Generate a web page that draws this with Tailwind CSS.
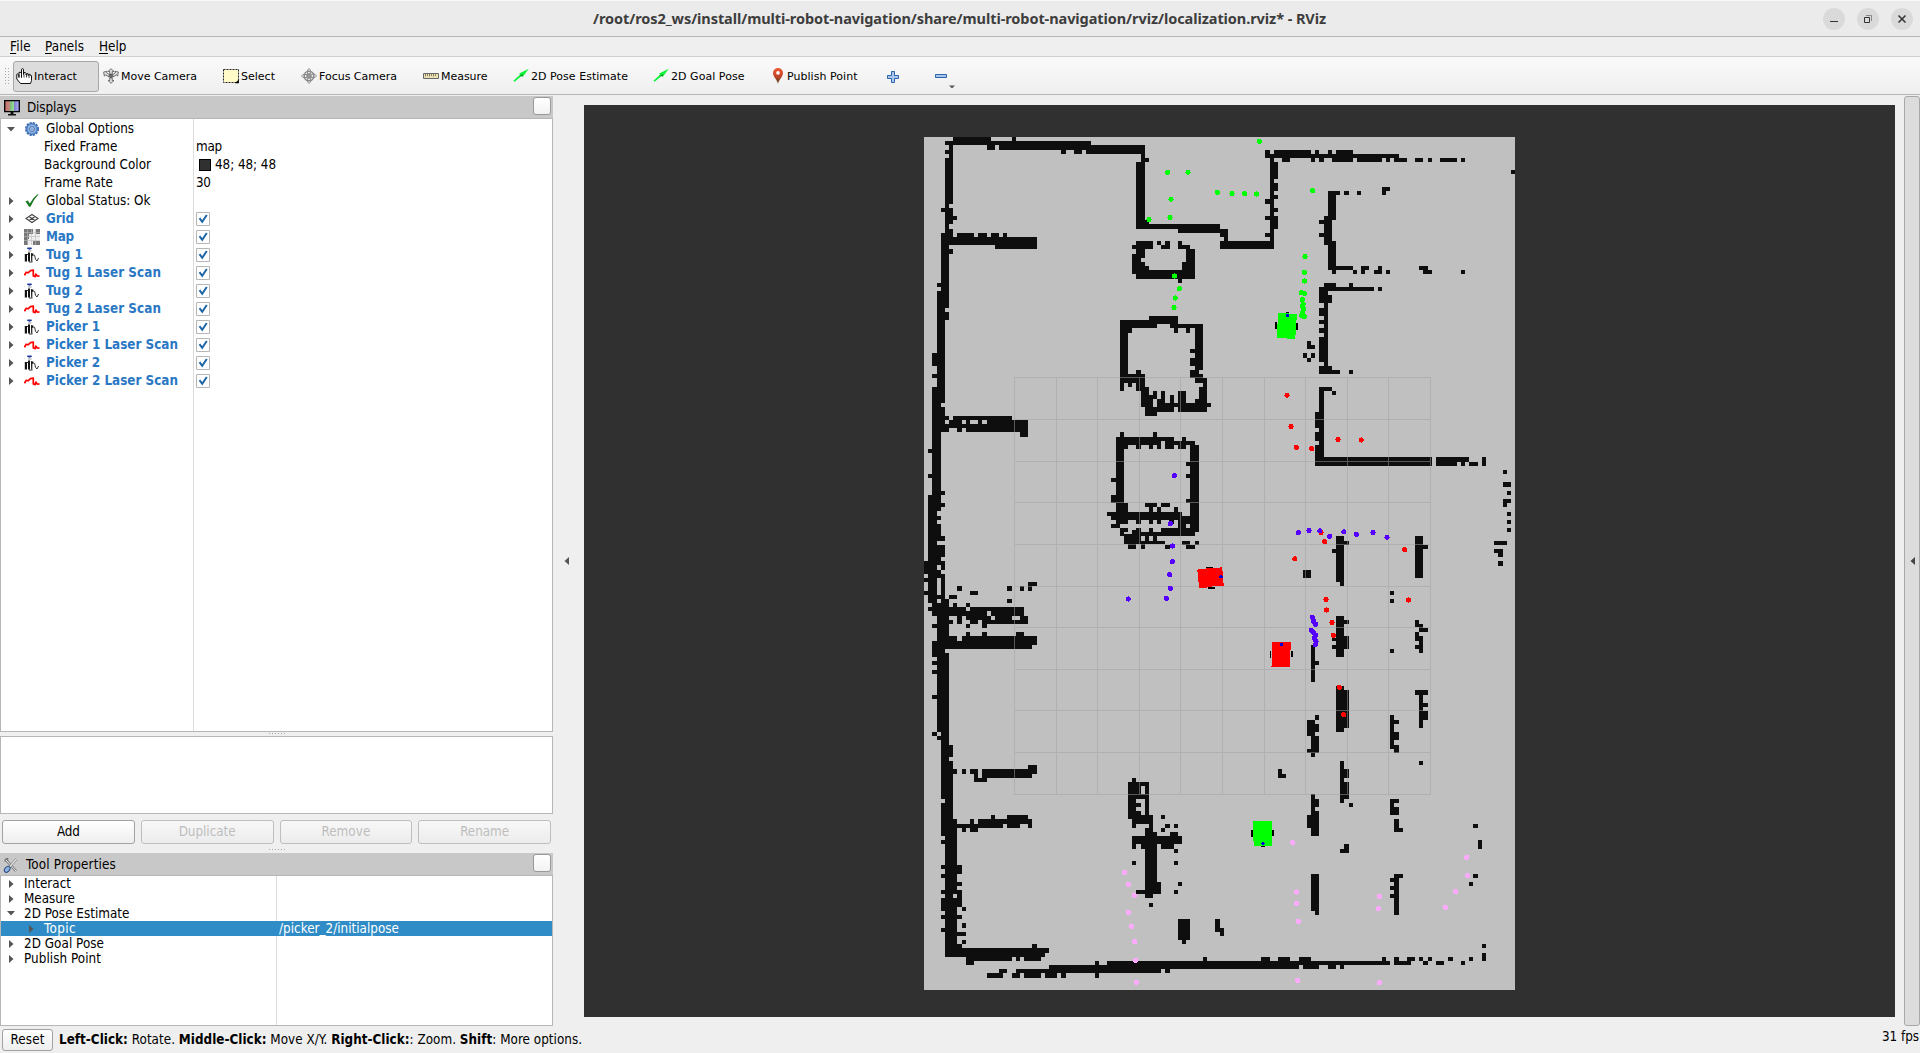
<!DOCTYPE html>
<html lang="en">
<head>
<meta charset="utf-8">
<title>RViz</title>
<script src="https://cdn.jsdelivr.net/npm/@tailwindcss/browser@4"></script>
</head>
<body class="w-[1920px] h-[1053px] overflow-hidden bg-[#efefef] text-black flex flex-col font-[family-name:'DejaVu_Sans_Condensed','DejaVu_Sans',sans-serif] text-[13.33px] font-stretch-condensed whitespace-nowrap">

<svg class="absolute size-0">
  <defs>
  <linearGradient id="pg" x2="0" y2="1"><stop offset="0" stop-color="#f0582f"/><stop offset=".5" stop-color="#c4452c"/><stop offset="1" stop-color="#4f4418"/></linearGradient>
  <linearGradient id="sg"><stop offset="0" stop-color="#c96a6a"/><stop offset=".33" stop-color="#c08a80"/><stop offset=".34" stop-color="#73b873"/><stop offset=".65" stop-color="#9ae09a"/><stop offset=".66" stop-color="#8080c8"/><stop offset="1" stop-color="#b0b0ff"/></linearGradient>
  </defs>
  <symbol id="hand" viewBox="0 0 16 16"><path d="M5.5 9V1.8Q5.5.6 6.5.6T7.5 1.8V6.5L8 4.6Q9.4 3.8 10 5.2V7Q10.3 4.8 12.2 5.8V7.6Q12.5 5.8 14 6.4V7.8Q14.6 6.6 15.5 7.6V12.5L14.5 15.5H4.5L.8 11V6.2Q1.8 5.2 2.8 6.6L3 9.5V4.4H5.5" fill="#fff" stroke="#111"/><path d="M5.5 6V10M8 6.5V9.5M10.5 7V9.5M13 7.5V10" stroke="#111" fill="none" stroke-width=".8"/></symbol>
  <symbol id="move" viewBox="0 0 16 16"><g fill="#ddd" stroke="#555" stroke-width=".8"><path d="M8 .7L11 3.5H9.3V6.5H6.7V3.5H5z M8 15.3L11 12.5H9.3V9.5H6.7V12.5H5z M.6 4L4.2 3.2L3.6 4.8L7 7L6 9L2.4 6.8L1.4 8.2z M15.4 4L11.8 3.2L12.4 4.8L9 7L10 9L13.6 6.8L14.6 8.2z"/></g><path d="M5.5 8H10.5M8 5.5V10.5" stroke="#444"/></symbol>
  <symbol id="select" viewBox="0 0 16 16"><path d="M.5 1.5h15v13h-15z" fill="#fffac8" stroke="#222" stroke-dasharray="2 1"/><path d="M15.8 11.5v3.8H12z" fill="#000"/></symbol>
  <symbol id="focus" viewBox="0 0 16 16"><g fill="none" stroke="#8a8a8a"><circle cx="8" cy="8" r="4.8" stroke-width="1.6"/><circle cx="8" cy="8" r="2"/><path d="M8 .5L9.3 2V6.2H14L15.5 8L14 9.5H9.6V14L8 15.5L6.7 14V9.6H2L.5 8L2 6.5H6.6V2z"/></g><path d="M5 8h6M8 5v6" stroke="#666" stroke-width=".8"/></symbol>
  <symbol id="ruler" viewBox="0 0 16 16"><path d="M.5 5.5h15v5h-15z" fill="#ece2b4" stroke="#666"/><path d="M2.5 6v2.5M4.5 6v2M6.5 6v2.5M8.5 6v2M10.5 6v2.5M12.5 6v2" stroke="#5d5640" stroke-width=".7"/></symbol>
  <symbol id="arrow" viewBox="0 0 16 16"><path d="M.4 12.8L7 6.8L6.2 5.5L15.8.7L10 8.4L8.6 8L1.6 13.8z" fill="#0bf339"/><path d="M6.2 7.8L10 8.4L9.6 6.2z" fill="#0a9a22"/></symbol>
  <symbol id="pin" viewBox="0 0 12 16"><path d="M6 16C5.5 12 1 9 1 5A5 5 0 0 1 11 5C11 9 6.5 12 6 16z" fill="url(#pg)"/><circle cx="6" cy="4.9" r="1.8" fill="#fff"/></symbol>
  <symbol id="screen" viewBox="0 0 16 16"><path d="M.7.7h14.6v11H.7z" fill="url(#sg)" stroke="#000" stroke-width="1.3"/><path d="M6.5 12h3v2h2.5v1.6H4V14h2.5z" fill="#111"/></symbol>
  <symbol id="gear" viewBox="0 0 16 16"><circle cx="8" cy="8" r="6" fill="#8fb3e0" stroke="#3a6cb0" stroke-width="2" stroke-dasharray="2.2 .94"/><circle cx="8" cy="8" r="5" fill="#8fb3e0" stroke="#4c7dc0"/><circle cx="8" cy="8" r="2.4" fill="#c5d9f2" stroke="#3a6cb0"/><circle cx="8" cy="8" r=".8" fill="#3a6cb0"/></symbol>
  <symbol id="ok" viewBox="0 0 16 16"><path d="M1.5 8.2L3.8 7.5L5.8 10.5Q9 4.5 13.5 1.2L14.5 1.6Q9.5 6.5 6.5 13.8H5z" fill="#1a7a22"/></symbol>
  <symbol id="grid" viewBox="0 0 16 16"><path d="M8 3.5L14 7.5L8 11.5L2 7.5z M5 5.5L11 9.5M11 5.5L5 9.5" stroke="#444" fill="none" stroke-width="1.1"/></symbol>
  <symbol id="map" viewBox="0 0 16 16"><path d="M0 0h16v16H0z" fill="#eee"/><path d="M0 0h9v5H5v5H4v6H0zM12 0h4v5h-4zM9 12h7v4H9z" fill="#777"/><path d="M3.5 0v16M7.5 0v16M11.5 0v16M0 3.5h16M0 7.5h16M0 11.5h16" stroke="#bbb" stroke-width=".6"/></symbol>
  <symbol id="robot" viewBox="0 0 16 16"><path d="M3.5 .5h4l.5 1.3-2.5 1-2.5-1z" fill="#223a9a"/><path d="M4 3.5h3.5v1H4z" fill="#999"/><path d="M.8 7h2.2v7.5H.8zM4 5.5h2v9H4z M7 6l2.5.7V8L8.3 9v5.5H7.2z" fill="#111"/><path d="M9.5 8.5Q11 7.5 11 10T13 14L14.6 11M3 7.5h1.5M5 15h3.5" stroke="#333" fill="none" stroke-width="1"/></symbol>
  <symbol id="laser" viewBox="0 0 16 16"><path d="M.5 10.2L2.2 7.3L4 7.8L6.5 5.6L9.3 5V11L11.2 11.6L11.8 9L13 10.8L15.5 11.2" fill="none" stroke="#f00" stroke-width="1.7" stroke-linejoin="round"/></symbol>
  <symbol id="tools" viewBox="0 0 16 16"><path d="M3 3L13 14M4 1v2.5H1.5" stroke="#777" stroke-width="2.6" fill="none"/><path d="M3 3L13 14" stroke="#eee"/><path d="M13.5 2L5.5 11" stroke="#777" stroke-width="2.4"/><path d="M13.5 2L6 10.5" stroke="#e8e8e8" stroke-width="1.2"/><ellipse cx="4.2" cy="12.3" rx="2.3" ry="3.4" transform="rotate(42 4.2 12.3)" fill="#8fb3e0" stroke="#23457c"/></symbol>
  <symbol id="right" viewBox="0 0 5 8"><path d="M0 0L4.5 4L0 8z"/></symbol>
  <symbol id="down" viewBox="0 0 8 5"><path d="M0 0H8L4 4.5z"/></symbol>
  <symbol id="check" viewBox="0 0 14 14"><path d="M.5.5h13v13H.5z" fill="#fff" stroke="#b6b6b6"/><path d="M3.5 6.2L6.2 9.8L10.8 3" stroke="#1e66a8" stroke-width="2" fill="none"/></symbol>
</svg>

<header class="h-[37px] shrink-0 bg-[#ebebeb] border-t border-t-[#fafafa] border-b border-b-[#b6b6b6] flex items-center text-[#3d3d3d]">
  <h1 class="ml-[593px] w-[733px] font-[family-name:'Noto_Sans',sans-serif] font-stretch-normal font-bold text-[14.5px] pt-px"><span data-w="733">/root/ros2_ws/install/multi-robot-navigation/share/multi-robot-navigation/rviz/localization.rviz* - RViz</span></h1>
  <div class="ml-auto mr-[7px] flex gap-3">
    <div class="size-[22px] rounded-full bg-[#dadada]"><svg viewBox="0 0 22 22"><path d="M7 13.5h8" stroke="#333"/></svg></div>
    <div class="size-[22px] rounded-full bg-[#dadada]"><svg viewBox="0 0 22 22" fill="none"><path d="M7.5 9.5h5v5h-5z" stroke="#333"/><path d="M9 7.5h5.5V13" stroke="#888"/></svg></div>
    <div class="size-[22px] rounded-full bg-[#dadada]"><svg viewBox="0 0 22 22"><path d="M7.5 7.5l7 7M14.5 7.5l-7 7" stroke="#333" stroke-width="1.5"/></svg></div>
  </div>
</header>

<nav class="h-5 shrink-0 border-b border-[#d0d0d0] flex items-center leading-[19px]">
  <div class="w-[35px] ml-[10px]"><span data-w="21"><u class="underline-offset-2">F</u>ile</span></div>
  <div class="w-[54px]"><span data-w="39"><u class="underline-offset-2">P</u>anels</span></div>
  <div><span data-w="27.5"><u class="underline-offset-2">H</u>elp</span></div>
</nav>

<div class="h-[38px] shrink-0 border-b border-[#b6b6b6] bg-linear-to-b from-[#fafafa] to-[#efefef] flex items-center pt-[2px] font-[family-name:'DejaVu_Sans',sans-serif] font-stretch-normal text-[11px]">
  <svg class="w-2 h-[18px] ml-1"><path d="M1.5 0v18M4.5 0v18" stroke="#aaa" stroke-dasharray="1 2"/></svg>
  <div class="w-[86px] h-[31px] ml-px border border-[#a8a8a8] rounded-[3px] bg-[#dcdcdc] flex items-center gap-[2px] pl-[2px]"><svg class="size-4 mb-[2px]"><use href="#hand"/></svg><span class="pt-px" data-w="42.7">Interact</span></div>
  <div class="w-[120px] pl-1 flex items-center gap-[2px]"><svg class="size-4 mb-[2px]"><use href="#move"/></svg><span class="pt-px" data-w="76">Move Camera</span></div>
  <div class="w-[78px] pl-1 flex items-center gap-[2px]"><svg class="size-4 mb-[2px]"><use href="#select"/></svg><span class="pt-px" data-w="34">Select</span></div>
  <div class="w-[122px] pl-1 flex items-center gap-[2px]"><svg class="size-4 mb-[2px]"><use href="#focus"/></svg><span class="pt-px" data-w="78">Focus Camera</span></div>
  <div class="w-[90px] pl-1 flex items-center gap-[2px]"><svg class="size-4 mb-[2px]"><use href="#ruler"/></svg><span class="pt-px" data-w="46.5">Measure</span></div>
  <div class="w-[140px] pl-1 flex items-center gap-[2px]"><svg class="size-4 mb-[2px]"><use href="#arrow"/></svg><span class="pt-px" data-w="97">2D Pose Estimate</span></div>
  <div class="w-[118px] pl-1 flex items-center gap-[2px]"><svg class="size-4 mb-[2px]"><use href="#arrow"/></svg><span class="pt-px" data-w="73.5">2D Goal Pose</span></div>
  <div class="w-[121px] pl-[5px] flex items-center gap-[3px]"><svg class="w-3 h-4 mb-[2px]"><use href="#pin"/></svg><span class="pt-px" data-w="70.5">Publish Point</span></div>
  <svg class="w-3 h-3 -ml-px" viewBox="0 0 12 12"><path d="M4.5.5h3v4h4v3h-4v4h-3v-4h-4v-3h4z" fill="#a8c6ec" stroke="#2d64ac"/></svg>
  <svg class="w-[22px] h-[22px] ml-9 mt-px" viewBox="0 0 22 22"><path d="M.5 8.5h11v3H.5z" fill="#a8c6ec" stroke="#2d64ac"/><path d="M14 19.5h6l-3 3z" fill="#555"/></svg>
</div>

<main class="h-[931px] shrink-0 flex pt-px">
  <aside class="w-[553px] flex flex-col">
    <div class="h-[22px] shrink-0 bg-[#c8c8c8] flex items-center pl-1">
      <svg class="size-4 mt-[2px]"><use href="#screen"/></svg>
      <span class="ml-[7px] pt-[2px]" data-w="49.5">Displays</span>
      <i class="ml-auto mr-[2px] w-[18px] h-[18px] mb-[2px] rounded-[3px] border border-[#999] bg-linear-to-b from-white to-[#f2f2f2]"></i>
    </div>
    <div id="displays" class="h-[614px] pt-px shrink-0 bg-white border border-[#b6b6b6] flex flex-col bg-[linear-gradient(#dcdcdc,#dcdcdc)] bg-[length:1px_100%] bg-[position:192px_0] bg-no-repeat"></div>
    <svg class="h-1 w-4 self-center mr-0 shrink-0"><path d="M0 1.5h16" stroke="#aaa" stroke-dasharray="1 2"/></svg>
    <div class="h-[78px] shrink-0 bg-white border border-[#b6b6b6]"></div>
    <div class="flex gap-[6px] px-[2px] pt-[6px] shrink-0">
      <button class="flex-1 h-6 rounded-[3px] border border-[#a2a2a2] bg-linear-to-b from-white to-[#eeeeee] leading-[22px]"><span data-w="23">Add</span></button>
      <button class="flex-1 h-6 rounded-[3px] border border-[#bebebe] bg-linear-to-b from-[#f8f8f8] to-[#ececec] leading-[22px] text-[#bebebe]"><span data-w="57">Duplicate</span></button>
      <button class="flex-1 h-6 rounded-[3px] border border-[#bebebe] bg-linear-to-b from-[#f8f8f8] to-[#ececec] leading-[22px] text-[#bebebe]"><span data-w="49">Remove</span></button>
      <button class="flex-1 h-6 rounded-[3px] border border-[#bebebe] bg-linear-to-b from-[#f8f8f8] to-[#ececec] leading-[22px] text-[#bebebe]"><span data-w="49">Rename</span></button>
    </div>
    <svg class="h-[9px] w-4 self-center shrink-0"><path d="M0 5.5h16" stroke="#aaa" stroke-dasharray="1 2"/></svg>
    <div class="h-[22px] shrink-0 bg-[#c8c8c8] flex items-center pl-[3px]">
      <svg class="size-4 mt-[2px]"><use href="#tools"/></svg>
      <span class="ml-[7px] pt-[2px]" data-w="90">Tool Properties</span>
      <i class="ml-auto mr-[2px] w-[18px] h-[18px] mb-[2px] rounded-[3px] border border-[#999] bg-linear-to-b from-white to-[#f2f2f2]"></i>
    </div>
    <div id="tools-tree" class="h-[151px] shrink-0 bg-white border border-[#b6b6b6] flex flex-col bg-[linear-gradient(#dcdcdc,#dcdcdc)] bg-[length:1px_100%] bg-[position:275px_0] bg-no-repeat"></div>
  </aside>
  <div class="w-[31px] flex items-center"><svg class="w-[5px] h-2 ml-[11px] rotate-180 fill-[#555]"><use href="#right"/></svg></div>
  <section class="w-[1311px] h-[912px] mt-[9px] bg-[#303030]">
    <svg id="scene" width="1311" height="912" viewBox="584 105 1311 912" shape-rendering="crispEdges"></svg>
  </section>
  <div class="w-4 ml-[9px] border border-[#a8a8a8] rounded-[3px] bg-[#dcdcdc] flex items-center justify-center"><svg class="w-[5px] h-2 rotate-180 fill-[#444]"><use href="#right"/></svg></div>
</main>

<footer class="flex-1 flex items-start">
  <button class="ml-[2px] mt-[3px] w-[51px] h-[22px] rounded-[3px] border border-[#a2a2a2] bg-linear-to-b from-white to-[#eeeeee] leading-5"><span data-w="34">Reset</span></button>
  <p class="ml-[6px] mt-[4px] leading-5"><span data-w="523"><b>Left-Click:</b> Rotate. <b>Middle-Click:</b> Move X/Y. <b>Right-Click:</b>: Zoom. <b>Shift</b>: More options.</span></p>
  <p class="ml-auto mr-px mt-px leading-5"><span data-w="37">31 fps</span></p>
</footer>

<script>
const icon = (id, cls) => `<svg class="${cls}"><use href="#${id}"/></svg>`;
const twisty = s => s === 'r' ? icon('right', 'w-[5px] h-2 ml-2 mr-[2px] fill-[#555]')
  : s === 'd' ? icon('down', 'w-2 h-[5px] ml-[6px] mr-px fill-[#555]') : '<i class="w-[15px]"></i>';

// [twisty, icon, label, label width, value or 1 for a checkbox]
const displays = [
  ['d', 'gear', 'Global Options', 88, ''],
  ['', '', 'Fixed Frame', 73.5, '<span data-w="26">map</span>'],
  ['', '', 'Background Color', 107, '<i class="size-3 ml-[3px] mr-[4px] border border-black bg-[#303030]"></i><span data-w="61">48; 48; 48</span>'],
  ['', '', 'Frame Rate', 69, '<span data-w="14.5">30</span>'],
  ['r', 'ok', 'Global Status: Ok', 104.5, ''],
  ['r', 'grid', 'Grid', 28, 1], ['r', 'map', 'Map', 28, 1],
  ['r', 'robot', 'Tug 1', 37, 1], ['r', 'laser', 'Tug 1 Laser Scan', 115, 1],
  ['r', 'robot', 'Tug 2', 37, 1], ['r', 'laser', 'Tug 2 Laser Scan', 115, 1],
  ['r', 'robot', 'Picker 1', 54, 1], ['r', 'laser', 'Picker 1 Laser Scan', 132, 1],
  ['r', 'robot', 'Picker 2', 54, 1], ['r', 'laser', 'Picker 2 Laser Scan', 132, 1]];
document.getElementById('displays').innerHTML = displays.map(([t, ic, label, w, v]) => `
  <div class="h-[18px] shrink-0 flex items-center leading-[18px]">
    <div class="w-[195px] flex items-center">${twisty(t)}${ic ? icon(ic, 'size-4 ml-2 mr-[6px]') : '<i class="w-7"></i>'}
    <span class="${v === 1 ? 'font-bold text-[#2a78c4]' : ''}" data-w="${w}">${label}</span></div>
    ${v === 1 ? icon('check', 'size-[14px]') : v}
  </div>`).join('');

const tools = [['r', 'Interact', 47], ['r', 'Measure', 51], ['d', '2D Pose Estimate', 105.5], ['r', 'Topic', 32, 1], ['r', '2D Goal Pose', 80], ['r', 'Publish Point', 77]];
document.getElementById('tools-tree').innerHTML = tools.map(([t, label, w, sel]) => `
  <div class="h-[15px] shrink-0 flex items-center leading-[15px] ${sel ? 'bg-[#308cc6] text-white' : ''}">
    <div class="w-[278px] flex items-center">${sel ? '<i class="w-5"></i>' : ''}${twisty(t)}<span class="ml-2" data-w="${w}">${label}</span></div>
    ${sel ? '<span data-w="120">/picker_2/initialpose</span>' : ''}
  </div>`).join('');

// Occupied cells per sector, in thirds of a pixel: x1 y1 x2 y2
const sectors = [
 {o: [900, 120], cells: `159 51 273 75,336 51 348 63,135 63 573 75,147 75 159 90,135 90 159 102,147 102 159 114,135 114 159 252,135 252 147 264,123 264 159 276,135 276 159 288,135 288 171 300,135 300 159 312,135 312 147 327,135 327 159 339,123 339 159 375,171 339 222 351,234 339 261 351,273 339 297 351,309 339 321 351,147 351 411 375,285 375 411 387,123 375 147 387,123 387 159 402,123 402 147 489,111 489 147 501,123 501 147 513,111 513 147 564,111 564 135 576,111 576 147 600,111 600 135 699,96 699 135 738,111 738 135 762,96 762 135 774,111 774 135 801,96 801 135 849,96 849 123 861,96 861 135 888,261 75 285 90,297 75 573 90,483 90 498 102,522 90 546 102,558 75 735 102,723 102 735 126,735 114 747 126,708 126 735 327,735 300 747 312,735 312 960 327,834 327 984 339,960 339 984 351,972 351 984 363,960 363 990 387,708 363 759 387,696 375 708 387,708 387 735 402,696 402 735 414,696 414 723 426,696 426 735 438,696 438 747 450,696 450 708 462,708 450 885 477,846 426 885 450,858 387 885 426,834 363 846 375,834 375 870 387,771 363 783 375,783 375 810 387,795 363 810 375,834 477 846 489,747 588 834 612,660 600 747 624,747 612 771 624,810 612 909 624,660 624 696 639,660 639 684 762,822 624 834 639,858 624 870 639,885 624 909 750,870 687 885 699,870 714 885 738,870 750 897 762,870 762 909 774,708 750 723 762,660 762 735 789,660 789 672 813,684 789 696 801,708 789 735 813,885 774 921 789,909 789 921 876,897 801 909 849,723 801 747 861,735 861 771 888,759 813 771 837,747 825 771 837,747 837 759 861,783 813 795 837,771 837 795 849,810 825 822 849,771 849 822 876,822 849 834 861,834 813 858 876,858 849 921 876,921 849 933 861,885 837 909 849`,
  green: '803 157,864 157,952 217,813 238,747 299,810 293,824 468,838 506,826 534,822 563'},
 {o: [1220, 120], cells: `135 90 150 114,162 90 273 102,285 90 297 102,324 90 336 102,348 90 399 102,150 102 537 114,150 114 162 387,186 114 210 126,273 114 285 126,297 114 312 126,336 114 399 126,411 114 486 126,498 114 510 126,522 114 561 126,585 114 609 126,624 114 636 126,660 114 711 126,723 114 735 126,873 150 885 162,162 126 174 177,162 189 174 213,162 225 174 237,135 237 150 252,162 264 174 276,135 288 150 300,162 288 174 327,135 339 150 351,0 363 162 387,0 327 24 351,12 351 24 363,486 201 510 213,486 213 498 225,324 213 360 225,372 213 387 225,411 213 423 225,324 225 348 300,312 288 336 375,297 300 312 312,297 339 312 351,324 363 348 450,348 438 399 450,336 450 348 462,399 450 411 462,423 438 447 450,423 450 435 462,474 438 486 462,462 450 474 462,498 450 510 462,597 438 624 450,609 450 636 462,723 450 735 462,312 489 348 501,387 489 399 501,297 501 462 513,474 501 486 513,297 513 324 549,324 525 336 549,312 549 324 738,297 564 312 588,297 600 312 612,297 625 312 639,297 651 312 726,297 738 336 762,336 750 360 762,387 750 399 762,261 663 273 687,273 675 285 687,249 699 261 714,273 699 285 714,261 714 273 726,297 801 336 813,336 813 348 825,297 813 312 1011,285 876 297 924,285 936 297 963,285 975 297 1038,285 1011 636 1038,648 1011 711 1038,711 1011 747 1026,723 1026 735 1038,747 1026 774 1038,786 1011 798 1038,849 1050 861 1062`,
  green: '118 64,36 221,74 221,110 222,278 212,255 410,253 457,254 483,244 518,253 520,247 539,250 552,248 558,251 567,247 578,245 586,253 590', red: '201 826,213 920,229 982,275 986,354 959,424 960'},
 {o: [900, 400], cells: `96 48 147 60,159 48 336 60,96 60 135 72,147 60 186 72,198 60 210 72,234 60 246 72,261 60 384 72,96 72 384 84,96 84 147 96,171 84 186 96,198 84 384 96,360 96 384 111,96 96 123 285,84 147 96 159,84 222 96 234,123 273 135 285,84 285 123 297,84 297 123 309,84 309 135 321,84 321 123 333,84 333 111 348,84 348 123 360,84 360 111 372,84 372 123 408,84 408 135 423,84 423 111 435,84 435 135 471,84 471 123 483,72 483 135 495,72 495 111 510,123 495 135 510,72 510 123 522,84 522 135 534,72 534 111 546,123 534 135 573,84 546 111 573,72 573 111 585,123 573 135 585,84 585 135 597,84 597 111 609,123 597 147 609,96 609 147 621,159 609 171 621,198 609 210 621,84 621 198 633,210 621 372 633,171 558 186 573,210 573 234 585,147 585 171 597,321 558 336 573,360 558 372 573,384 546 411 558,384 558 396 573,321 597 336 609,96 633 261 648,273 633 372 648,111 648 147 660,171 648 186 672,198 648 273 660,285 648 336 660,360 648 384 660,111 660 159 672,210 660 234 672,246 660 384 672,96 672 147 684,198 672 210 684,246 672 261 684,111 684 147 723,198 696 210 708,246 696 261 708,348 696 372 708,147 708 171 723,186 708 411 735,96 723 396 747,96 747 135 759,96 759 147 771,111 771 147 783,96 783 147 795,111 795 147 810,96 810 147 822,111 822 147 885,96 885 147 897,111 897 147 900,660 96 672 111,759 96 771 111,846 111 858 123,648 111 822 123,648 123 783 135,795 123 885 135,648 135 684 147,708 135 723 147,747 135 759 147,771 135 783 147,795 135 822 147,834 123 858 147,870 135 897 396,858 186 870 198,858 222 870 234,858 297 870 309,648 147 672 309,633 234 648 246,633 285 648 309,648 309 684 336,735 309 771 321,783 309 810 321,747 321 759 336,771 321 783 336,822 321 834 336,621 336 648 348,648 336 846 360,846 348 870 372,633 348 648 360,648 360 684 372,708 360 723 372,747 360 759 372,771 360 783 372,807 360 822 372,834 360 858 408,633 372 660 384,858 384 885 408,660 384 672 408,672 384 684 396,672 402 684 408,684 402 696 408,696 390 708 408,708 384 723 408,672 408 723 423,735 408 747 423,759 408 771 423,672 423 795 433,747 384 759 396,720 396 885 408,783 384 834 408,684 433 708 447,723 433 735 447,795 435 810 447,846 423 870 435,858 435 885 447,885 423 897 435`,
  blue: '823 227,811 371,818 438,817 485,809 524,811 565,799 595,685 597'},
 {o: [1220, 460], cells: `348 228 372 366,372 243 387 255,336 267 348 279,360 366 372 378,249 330 273 354,585 228 609 354,609 255 624 267,510 393 522 405,510 417 522 429,849 66 873 81,861 93 873 105,849 117 873 129,849 129 861 141,861 156 873 168,861 180 873 192,861 204 873 216,822 243 861 255,822 267 849 279,834 279 849 291,834 303 849 318,348 468 372 591,372 480 387 492,372 528 387 567,336 534 348 543,336 555 348 567,585 480 597 501,597 492 609 504,597 504 624 516,585 516 597 543,597 528 609 579,585 555 597 567,510 567 522 579,273 555 285 666,285 603 297 615,348 678 372 816,372 690 387 804,585 690 624 705,597 705 609 804,609 729 624 741,609 753 624 780,285 765 297 780,261 780 285 828,285 792 297 816,273 828 297 879,261 867 273 879,273 879 285 891,510 765 522 867,522 780 537 792,522 816 537 840,522 855 537 879`,
  red: '303 218,314 245,225 297,554 269,318 419,320 450,336 488,340 526,566 420,358 682,371 764',
  blue: '235 218,267 212,300 213,329 229,372 216,409 223,459 218,501 232,277 472,281 484,287 493,274 511,281 518,287 525,283 535,288 545,286 554'},
 {o: [900, 690], cells: `111 0 147 126,96 15 111 27,96 126 111 138,123 126 147 150,111 138 123 150,123 150 147 165,123 165 159 201,123 201 147 213,123 213 159 327,159 237 171 252,135 327 159 339,123 339 159 387,123 387 171 438,135 438 171 612,135 612 159 624,135 624 171 798,123 450 135 462,123 525 135 537,171 525 186 552,123 552 135 564,171 576 186 588,123 600 135 612,171 600 186 651,123 624 135 663,186 651 198 663,123 675 135 687,171 675 186 687,186 699 198 714,123 714 135 726,171 726 198 738,186 750 198 762,171 762 186 774,135 774 447 789,135 789 435 801,396 762 411 774,198 801 336 813,198 813 222 825,348 801 360 813,372 801 423 813,186 237 198 252,210 237 234 252,222 252 234 276,222 264 261 276,246 237 396 264,384 225 411 252,273 375 285 387,321 375 384 387,210 387 222 402,234 387 396 402,171 402 309 414,321 402 360 414,384 402 396 414,186 414 198 426,210 414 234 426,297 837 321 849,261 849 309 864,336 849 360 864,348 837 447 849,372 849 423 864,435 849 471 864,483 849 498 864,447 825 783 849,585 813 597 825,585 849 597 864,621 813 990 837,795 837 810 849,909 801 921 813,696 264 708 276,684 276 747 288,684 288 723 313,735 288 747 375,684 313 747 327,684 327 708 387,708 339 723 351,708 363 723 375,708 375 759 402,696 387 708 414,747 402 759 414,735 414 759 426,735 426 771 438,696 438 846 462,810 426 834 438,696 462 708 477,723 462 771 477,783 462 822 477,735 477 771 612,771 576 783 612,708 600 735 612,735 612 759 624,747 639 759 651,696 513 708 525,783 375 795 387,795 402 810 414,822 402 834 414,783 414 795 426,822 477 834 489,822 513 834 525,834 576 846 588,822 600 834 612,834 687 870 750,846 750 858 762,945 687 960 726,960 714 972 738`,
  pink: '674 547,685 583,703 616,685 667,694 709,704 755,707 811,709 877'},
 {o: [1220, 740], cells: `174 87 186 114,186 102 198 114,360 63 372 189,372 87 387 114,372 126 387 177,387 189 399 201,597 63 609 75,273 162 285 213,285 177 297 201,273 213 297 288,261 225 273 264,372 312 387 339,360 327 372 339,510 177 537 189,510 189 522 201,510 201 537 225,522 237 537 276,537 264 549 276,273 402 297 513,285 513 297 525,522 402 549 414,522 414 537 525,510 414 522 426,510 438 522 450,510 462 522 474,759 252 774 264,774 300 786 327,759 402 774 414,747 426 759 438,786 612 798 624,786 639 798 663,0 564 12 588,0 663 237 687,123 651 150 663,174 651 210 663,237 651 273 675,249 675 297 687,273 663 510 675,324 675 348 687,360 675 372 687,486 651 498 663,522 651 537 675,537 663 573 675,561 651 585 663,597 651 609 663,609 663 624 675,624 651 636 663,648 663 672 675,684 651 699 663,723 663 735 675,747 651 759 663`,
  pink: '218 308,230 456,230 490,235 544,478 469,475 506,676 502,707 455,743 407,740 352,233 722,478 728'}];

const at = (o, inner) => `<g transform="translate(${o[0]} ${o[1]}) scale(.33333333)">${inner}</g>`;
const rects = s => s.split(',').map(r => { const [a, b, c, d] = r.trim().split(' '); return `M${a} ${b}H${c}V${d}H${a}z`; }).join('');
const dots = (s, fill) => s ? `<path fill="${fill}" d="${s.split(',').map(p => { const [x, y] = p.split(' ').map(Number); return `M${x - 8} ${y}L${x - 6} ${y - 6}L${x} ${y - 8}L${x + 6} ${y - 6}L${x + 8} ${y}L${x + 6} ${y + 6}L${x} ${y + 8}L${x - 6} ${y + 6}z`; }).join('')}"/>` : '';
const robot = (o, color, body, wheels, beacon) => at(o, `<path fill="#000" d="${rects(wheels)}"/><polygon fill="${color}" points="${body}"/><path fill="#0000d8" d="${rects(beacon)}"/>`);

let g = '<path fill="#c0c0c0" d="M924 137H1515V990H924z"/>';
g += sectors.map(s => at(s.o, `<path fill="#0e0e0e" d="${rects(s.cells)}"/>`)).join('');
const gx = [1014, 1056, 1097, 1139, 1180, 1222, 1264, 1305, 1347, 1388, 1430];
const gy = [377, 419, 461, 502, 544, 586, 627, 669, 710, 752, 794];
g += `<path fill="none" stroke="#a0a0a4" stroke-opacity=".5" d="${gx.map(x => `M${x + .5} 377V795`).join('')}${gy.map(y => `M1014 ${y + .5}H1431`).join('')}"/>`;
g += sectors.map(s => at(s.o, dots(s.green, '#00ff00') + dots(s.red, '#ff0000') + dots(s.blue, '#5500ff') + dots(s.pink, '#ffaaff'))).join('');
g += robot([1220, 120], '#00ff00', '174 579 207 579 207 583 231 583 231 600 228 600 228 645 225 645 225 657 201 657 201 654 171 654 171 612 174 612', '165 606 171 627,228 610 234 630,198 576 207 582', '198 582 207 591');
g += robot([1220, 740], '#00ff00', '99 243 156 243 156 315 153 318 102 318 102 303 99 303', '93 270 99 291,156 270 162 288,123 318 135 321', '123 308 135 313,126 305 132 316');
g += robot([900, 400], '#ff0000', '891 510 897 506 939 505 957 503 966 501 966 513 969 513 969 543 972 557 943 558 918 563 897 563 897 546 894 546 894 516 891 516', '918 500 939 507,924 560 945 567', '957 528 969 533,960 525 966 534');
g += robot([1220, 460], '#ff0000', '156 546 213 546 213 570 210 570 210 621 153 621 153 618 156 618', '150 573 153 594,213 573 218 592', '180 549 189 557');
document.getElementById('scene').innerHTML = g;

// Track labels out to their nominal widths once styles and fonts have settled
function fitLabels() {
  const els = [...document.querySelectorAll('[data-w]')];
  els.forEach(el => { el.style.letterSpacing = '0px'; });
  const widths = els.map(el => { const r = document.createRange(); r.selectNodeContents(el); return r.getBoundingClientRect().width; });
  els.forEach((el, i) => { el.style.letterSpacing = ((+el.dataset.w - widths[i]) / el.textContent.length).toFixed(3) + 'px'; });
}
fitLabels();
addEventListener('load', () => { fitLabels(); requestAnimationFrame(fitLabels); document.fonts.ready.then(fitLabels); });
</script>
</body>
</html>
